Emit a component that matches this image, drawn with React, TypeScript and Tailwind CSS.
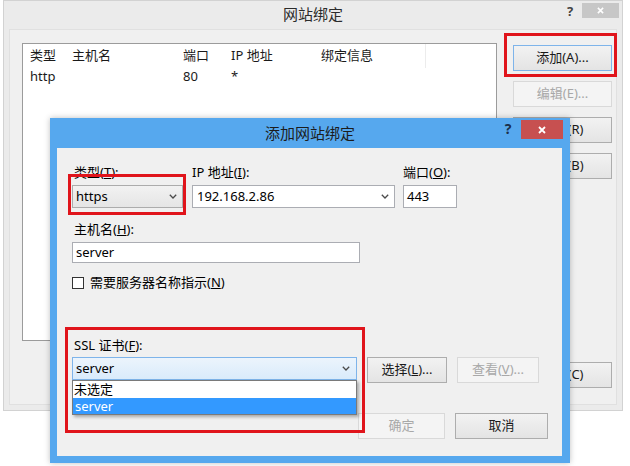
import type { ReactNode } from 'react';

const font = "font-['Noto_Sans','Noto_Sans_CJK_SC',sans-serif]";

function Chevron() {
  return (
    <svg width="8" height="5" viewBox="0 0 8 5" className="shrink-0">
      <path d="M0.8 0.8 L4 4 L7.2 0.8" fill="none" stroke="#4a4a4a" strokeWidth="1.3" />
    </svg>
  );
}

function Cross({ size = 8 }: { size?: number }) {
  return (
    <svg width={size} height={size} viewBox="0 0 8 8">
      <path d="M1 1 L7 7 M7 1 L1 7" stroke="white" strokeWidth="1.8" />
    </svg>
  );
}

function Btn({ children, disabled, focus, className = '' }: { children: ReactNode; disabled?: boolean; focus?: boolean; className?: string }) {
  const look = disabled
    ? 'bg-[#f4f4f4] border-[#d9d9d9] text-[#a8a8a8]'
    : focus
      ? 'bg-gradient-to-b from-[#f2f2f2] to-[#e4e4e4] border-[#7eb4ea] text-[#1a1a1a]'
      : 'bg-gradient-to-b from-[#f2f2f2] to-[#e4e4e4] border-[#adadad] text-[#1a1a1a]';
  return (
    <div className={`h-[26px] border flex items-center justify-center text-[13px] ${look} ${className}`}>
      {children}
    </div>
  );
}

export default function App() {
  return (
    <div className={`relative w-[630px] h-[466px] bg-white overflow-hidden text-[13px] text-black ${font}`}>
      {/* 网站绑定 outer window */}
      <div className="ml-[3px] w-[620px] h-[411px] bg-[#ebebeb] border border-[#d2d2d2] flex flex-col">
        <div className="h-[28px] flex items-start shrink-0">
          <div className="w-[63px]" />
          <div className="flex-1 text-center text-[15px] leading-[26px] text-[#2b2b2b]">网站绑定</div>
          <div className="w-[63px] flex items-start pt-[2px] pr-[3px]">
            <span className="w-[22px] text-center font-bold text-[13px] leading-[16px] text-[#444]">?</span>
            <div className="ml-[1px] w-[37px] h-[15px] bg-[#c7c7c7] flex items-center justify-center">
              <Cross size={7} />
            </div>
          </div>
        </div>
        <div className="flex-1 mx-[5px] mb-[5px] bg-[#f0f0f0] border border-[#e0e0e0] flex pl-[12px] pt-[13px]">
          <div className="w-[475px] h-[298px] bg-white border border-[#9b9b9b]">
            <div className="h-[24px] flex items-center text-[13px] text-[#1a1a1a]">
              <div className="w-[49px] pl-[7px]">类型</div>
              <div className="w-[111px]">主机名</div>
              <div className="w-[48px]">端口</div>
              <div className="w-[90px]">IP 地址</div>
              <div className="w-[105px] h-full flex items-center border-r border-[#ececec]">绑定信息</div>
            </div>
            <div className="h-[18px] flex items-center text-[13px] text-[#1a1a1a]">
              <div className="w-[49px] pl-[7px]">http</div>
              <div className="w-[111px]" />
              <div className="w-[48px]">80</div>
              <div className="w-[90px]">*</div>
            </div>
          </div>
          <div className="ml-[16px] w-[99px] pt-[2px] flex flex-col">
            <Btn focus>添加(A)...</Btn>
            <Btn disabled className="mt-[10px]">编辑(E)...</Btn>
            <Btn className="mt-[10px]">删除(R)</Btn>
            <Btn className="mt-[10px]">浏览(B)</Btn>
            <Btn className="mt-[183px]">关闭(C)</Btn>
          </div>
        </div>
      </div>

      {/* 添加网站绑定 dialog */}
      <div className="absolute left-[50px] top-[118px] w-[520px] h-[345px] bg-[#56a8ee] flex flex-col shadow-[0_0_6px_rgba(0,0,0,0.25)]">
        <div className="h-[30px] flex items-start shrink-0">
          <div className="w-[72px]" />
          <div className="flex-1 text-center text-[15px] leading-[30px] text-[#1c1c1c]">添加网站绑定</div>
          <div className="w-[72px] flex items-start pt-[2px] pr-[7px]">
            <span className="w-[20px] text-center font-bold text-[14px] leading-[18px] text-[#1b2f4a]">?</span>
            <div className="ml-[3px] w-[42px] h-[19px] bg-[#c75050] flex items-center justify-center">
              <Cross size={8} />
            </div>
          </div>
        </div>
        <div className="relative flex-1 ml-[7px] mr-[8px] mb-[7px] bg-[#f0f0f0] pl-[15px] pt-[16px] flex flex-col">
          <div className="flex items-start">
            <div className="w-[111px]">
              <div className="leading-[16px] pl-[2px]">类型(<u>T</u>):</div>
              <div className="mt-[5px] h-[23px] border border-[#acacac] bg-gradient-to-b from-[#f2f2f2] to-[#e5e5e5] flex items-center justify-between pl-[3px] pr-[5px]">
                <span>https</span>
                <Chevron />
              </div>
            </div>
            <div className="ml-[9px] w-[203px]">
              <div className="leading-[16px]">IP 地址(<u>I</u>):</div>
              <div className="mt-[5px] h-[23px] border border-[#abadb3] bg-white flex items-center justify-between pl-[4px] pr-[5px]">
                <span>192.168.2.86</span>
                <Chevron />
              </div>
            </div>
            <div className="ml-[8px] w-[54px]">
              <div className="leading-[16px]">端口(<u>O</u>):</div>
              <div className="mt-[5px] h-[23px] border border-[#abadb3] bg-white flex items-center pl-[3px]">443</div>
            </div>
          </div>

          <div className="mt-[13px] leading-[16px] pl-[2px]">主机名(<u>H</u>):</div>
          <div className="mt-[5px] w-[288px] h-[21px] border border-[#abadb3] bg-white flex items-center pl-[3px]">server</div>

          <div className="mt-[12px] h-[16px] flex items-center">
            <div className="w-[12px] h-[12px] border border-[#333] bg-white" />
            <span className="ml-[6px]">需要服务器名称指示(<u>N</u>)</span>
          </div>

          <div className="mt-[46px] leading-[16px] pl-[2px]">SSL 证书(<u>F</u>):</div>
          <div className="mt-[4px] flex items-start">
            <div className="w-[285px] h-[23px] border border-[#7eb4ea] bg-gradient-to-b from-[#ecf4fc] to-[#d9ebfb] flex items-center justify-between pl-[3px] pr-[6px]">
              <span>server</span>
              <Chevron />
            </div>
            <Btn className="ml-[10px] w-[80px]">选择(<u>L</u>)...</Btn>
            <Btn disabled className="ml-[10px] w-[82px]">查看(<u>V</u>)...</Btn>
          </div>

          <div className="mt-[30px] flex justify-end pr-[14px]">
            <Btn disabled className="w-[87px]">确定</Btn>
            <Btn className="ml-[10px] w-[93px]">取消</Btn>
          </div>

          {/* open dropdown list */}
          <div className="absolute left-[15px] top-[232px] w-[285px] h-[35px] bg-white border border-[#7a7a7a] shadow-[2px_2px_3px_rgba(0,0,0,0.3)] flex flex-col">
            <div className="h-[17px] leading-[17px] pl-[1px] text-black">未选定</div>
            <div className="h-[16px] leading-[16px] pl-[2px] bg-[#3399ff] text-white">server</div>
          </div>
        </div>
      </div>

      {/* red annotation boxes */}
      <div className="absolute left-[68px] top-[174px] w-[118px] h-[41px] border-[3px] border-[#e0141b] pointer-events-none" />
      <div className="absolute left-[65px] top-[327px] w-[300px] h-[106px] border-[3px] border-[#e0141b] pointer-events-none" />
      <div className="absolute left-[504px] top-[33px] w-[113px] h-[44px] border-[3px] border-[#e0141b] pointer-events-none" />
    </div>
  );
}
